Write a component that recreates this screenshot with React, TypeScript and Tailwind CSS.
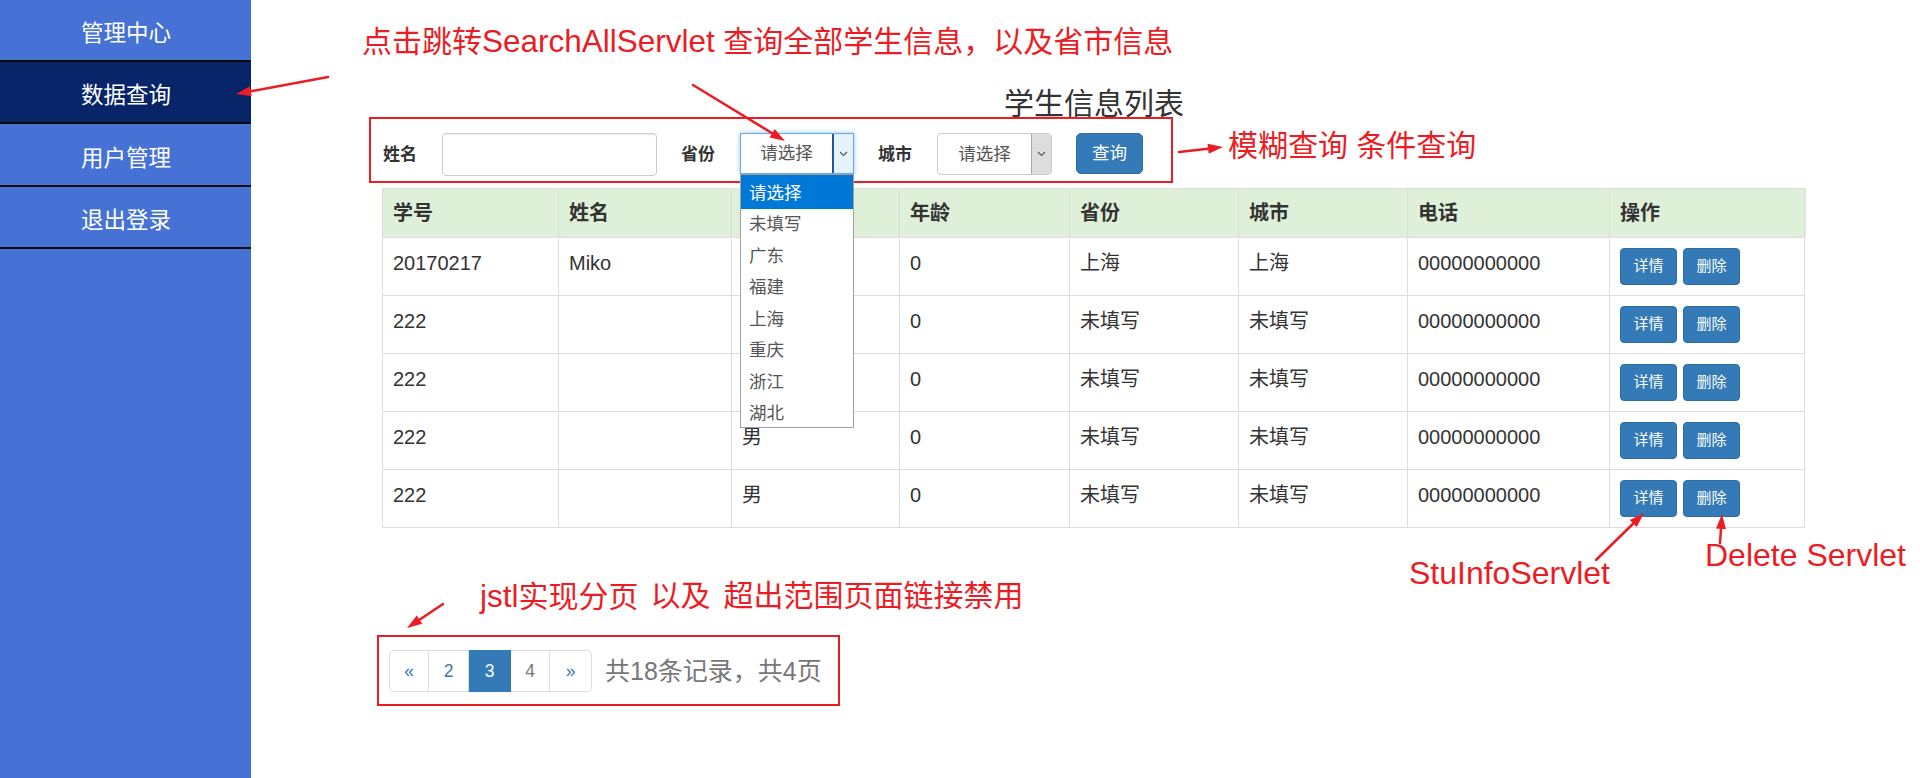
import React from 'react';

// Left navigation entries
const navItems = [
  { label: '管理中心', h: 'h-[62px]', active: false },
  { label: '数据查询', h: 'h-[62px]', active: true },
  { label: '用户管理', h: 'h-[63px]', active: false },
  { label: '退出登录', h: 'h-[62px]', active: false },
];

// 性别 header sits under the open dropdown, so it is left blank
const columns = [
  { title: '学号', w: 'w-[176px]' },
  { title: '姓名', w: 'w-[173px]' },
  { title: '', w: 'w-[168px]' },
  { title: '年龄', w: 'w-[170px]' },
  { title: '省份', w: 'w-[169px]' },
  { title: '城市', w: 'w-[169px]' },
  { title: '电话', w: 'w-[202px]' },
  { title: '操作', w: 'w-[195px]' },
];

const rows = [
  ['20170217', 'Miko', '', '0', '上海', '上海', '00000000000'],
  ['222', '', '', '0', '未填写', '未填写', '00000000000'],
  ['222', '', '', '0', '未填写', '未填写', '00000000000'],
  ['222', '', '男', '0', '未填写', '未填写', '00000000000'],
  ['222', '', '男', '0', '未填写', '未填写', '00000000000'],
];

const provinces = ['请选择', '未填写', '广东', '福建', '上海', '重庆', '浙江', '湖北'];

const RED = '#ec1c24';

// Annotation arrow: a line ending in a filled head at (x2, y2)
const Arrow = ({ x1, y1, x2, y2 }: { x1: number; y1: number; x2: number; y2: number }) => {
  const a = Math.atan2(y2 - y1, x2 - x1);
  const len = 15;
  const half = 5;
  const bx = x2 - len * Math.cos(a);
  const by = y2 - len * Math.sin(a);
  const px = -Math.sin(a) * half;
  const py = Math.cos(a) * half;
  return (
    <g>
      <line x1={x1} y1={y1} x2={bx} y2={by} stroke={RED} strokeWidth="2.5" strokeLinecap="round" />
      <polygon points={`${x2},${y2} ${bx + px},${by + py} ${bx - px},${by - py}`} fill={RED} />
    </g>
  );
};

const Chevron = () => (
  <svg width="9" height="6" viewBox="0 0 9 6">
    <polyline points="1,1 4.5,4.5 8,1" fill="none" stroke="#555" strokeWidth="1.1" />
  </svg>
);

export default function App() {
  return (
    <div
      className="relative flex w-[1920px] h-[778px] overflow-hidden bg-white text-[#333]"
      style={{ fontFamily: "'Liberation Sans', 'Noto Sans CJK SC', sans-serif" }}
    >
      {/* Sidebar */}
      <aside className="w-[251px] shrink-0 bg-[#4672d6] flex flex-col">
        {navItems.map(item => (
          <div
            key={item.label}
            className={`${item.h} border-b-2 border-[#0a0a0a] flex items-center pl-[81px] pt-[8px] text-[22.5px] text-white ${
              item.active ? 'bg-[#072568]' : ''
            }`}
          >
            {item.label}
          </div>
        ))}
      </aside>

      {/* Main */}
      <main className="flex-1 pl-[131px] pt-[89px]">
        <div className="w-[1424px]">
          <h2 className="h-[28px] text-center text-[30px] leading-[30px] font-normal text-[#333]">学生信息列表</h2>

          {/* Search form */}
          <div
            className="relative -ml-[13px] w-[804px] h-[66px] border-2 flex items-start gap-[24px] pt-[14px] pl-[12px]"
            style={{ borderColor: RED }}
          >
            <label className="w-[35px] font-bold text-[17px] leading-[43px]">姓名</label>
            <div className="w-[215px] h-[43px] border border-[#ccc] rounded-[4px] bg-white shadow-[inset_0_1px_1px_rgba(0,0,0,0.075)]" />
            <label className="w-[35px] font-bold text-[17px] leading-[43px]">省份</label>
            <div className="relative w-[114px] h-[41px] flex border border-[#6aa7e6] bg-white shadow-[0_0_5px_rgba(102,175,233,0.7)]">
              <div className="flex-1 flex items-center justify-center text-[17.5px] text-[#555]">请选择</div>
              <div className="w-[21px] bg-[#e5f1fb] border-l-2 border-[#1d5a9c] flex items-center justify-center">
                <Chevron />
              </div>
              {/* Open option list */}
              <ul className="absolute left-[-1px] top-[40px] w-[114px] h-[254px] pt-[2px] bg-white border border-[#a0a0a0] z-20">
                {provinces.map((p, i) => (
                  <li
                    key={p}
                    className={`h-[31.5px] pl-[8px] flex items-center text-[17.5px] ${
                      i === 0 ? '-mt-[2px] pt-[2px] h-[33.5px] bg-[#0078d7] text-white' : 'text-[#555]'
                    }`}
                  >
                    {p}
                  </li>
                ))}
              </ul>
            </div>
            <label className="w-[35px] font-bold text-[17px] leading-[43px]">城市</label>
            <div className="w-[115px] h-[42px] flex border border-[#ccc] rounded-[4px] bg-white overflow-hidden">
              <div className="flex-1 flex items-center justify-center text-[17.5px] text-[#555]">请选择</div>
              <div className="w-[20px] bg-[#dddddd] border-l border-[#aaa] flex items-center justify-center">
                <Chevron />
              </div>
            </div>
            <button className="w-[67px] h-[41px] bg-[#337ab7] border border-[#2e6da4] rounded-[5px] text-white text-[17.5px]">
              查询
            </button>
          </div>

          {/* Student table */}
          <div className="mt-[5px] border-l border-t border-[#ddd] text-[20px]">
            <div className="flex h-[49px] bg-[#dff0d8]">
              {columns.map((c, i) => (
                <div key={i} className={`${c.w} border-r border-b border-[#ddd] pl-[10px] pt-[10px] font-bold leading-[28px]`}>
                  {c.title}
                </div>
              ))}
            </div>
            {rows.map((r, ri) => (
              <div key={ri} className="flex h-[58px]">
                {r.map((v, ci) => (
                  <div key={ci} className={`${columns[ci].w} border-r border-b border-[#ddd] pl-[10px] pt-[11px] leading-[28px]`}>
                    {v}
                  </div>
                ))}
                <div className={`${columns[7].w} border-r border-b border-[#ddd] pl-[10px] pt-[10px] flex gap-[6px]`}>
                  <button className="w-[57px] h-[37px] bg-[#337ab7] border border-[#2e6da4] rounded-[4px] text-white text-[15px]">详情</button>
                  <button className="w-[57px] h-[37px] bg-[#337ab7] border border-[#2e6da4] rounded-[4px] text-white text-[15px]">删除</button>
                </div>
              </div>
            ))}
          </div>

          {/* Pagination */}
          <div
            className="mt-[107px] -ml-[5px] w-[463px] h-[71px] border-2 flex items-start pt-[13px] pl-[10px]"
            style={{ borderColor: RED }}
          >
            <ul className="flex h-[42px] text-[17.5px]">
              <li className="w-[40px] border border-[#ddd] rounded-l-[5px] flex items-center justify-center text-[#337ab7]">«</li>
              <li className="w-[40px] border-y border-r border-[#ddd] flex items-center justify-center text-[#337ab7]">2</li>
              <li className="w-[42px] bg-[#337ab7] border-y border-r border-[#337ab7] flex items-center justify-center text-white">3</li>
              <li className="w-[39px] border-y border-r border-[#ddd] flex items-center justify-center text-[#777]">4</li>
              <li className="w-[42px] border-y border-r border-[#ddd] rounded-r-[5px] flex items-center justify-center text-[#337ab7]">»</li>
            </ul>
            <span className="ml-[13px] text-[25px] leading-[42px] text-[#777]">共18条记录，共4页</span>
          </div>
        </div>
      </main>

      {/* Red annotations drawn over the screenshot */}
      <div className="absolute left-[362px] top-[26px] text-[30px] leading-[30px] whitespace-nowrap" style={{ color: RED }}>
        点击跳转<span className="text-[31.5px]">SearchAllServlet</span> 查询全部学生信息，以及省市信息
      </div>
      <div className="absolute left-[1228px] top-[131px] text-[30px] leading-[30px] whitespace-nowrap" style={{ color: RED }}>
        模糊查询 条件查询
      </div>
      <div className="absolute left-[480px] top-[581px] flex text-[30px] leading-[30px] whitespace-nowrap" style={{ color: RED }}>
        <span><span className="text-[31.5px]">jstl</span>实现分页</span>
        <span className="ml-[12px]">以及</span>
        <span className="ml-[13px]">超出范围页面链接禁用</span>
      </div>
      <div className="absolute left-[1409px] top-[557px] text-[32px] leading-[32px] whitespace-nowrap" style={{ color: RED }}>
        StuInfoServlet
      </div>
      <div className="absolute left-[1705px] top-[539px] text-[32px] leading-[32px] whitespace-nowrap" style={{ color: RED }}>
        Delete Servlet
      </div>
      <svg className="absolute left-0 top-0 pointer-events-none" width="1920" height="778">
        <Arrow x1={328} y1={77} x2={236} y2={94} />
        <Arrow x1={693} y1={85} x2={785} y2={141} />
        <Arrow x1={1179} y1={152} x2={1223} y2={147} />
        <Arrow x1={443} y1={604} x2={407} y2={628} />
        <Arrow x1={1596} y1={560} x2={1644} y2={513} />
        <Arrow x1={1720} y1={543} x2={1722} y2={514} />
      </svg>
    </div>
  );
}
